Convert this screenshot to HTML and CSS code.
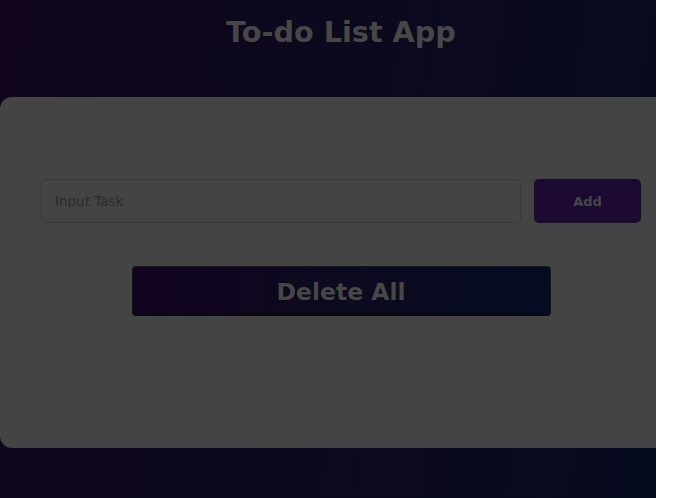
FILE: index.html
```html
<!DOCTYPE html>
<html>
<head>
<meta charset="utf-8">
<link rel="stylesheet" href="styles.css">
</head>
<body>
<div class="page">
  <div class="app">
    <h1 class="title">To-do List App</h1>
    <div class="card">
      <div class="entry">
        <input class="task-input" type="text" placeholder="Input Task">
        <button class="add-btn">Add</button>
      </div>
      <button class="delete-btn">Delete All</button>
    </div>
  </div>
</div>
</body>
</html>
```
FILE: styles.css
```css
html, body {
  margin: 0;
  padding: 0;
  background: #ffffff;
}
.page {
  width: 656px;
  height: 498px;
  overflow: hidden;
  background: linear-gradient(100deg, #10051d 0%, #0c091d 50%, #070b1e 100%);
  font-family: "DejaVu Sans", Verdana, sans-serif;
}
.app {
  width: 682px;
  display: flex;
  flex-direction: column;
}
.title {
  margin: 0;
  padding-top: 14px;
  height: 97px;
  box-sizing: border-box;
  text-align: center;
  font-size: 28.7px;
  line-height: 36px;
  font-weight: bold;
  color: #474747;
}
.card {
  height: 351px;
  box-sizing: border-box;
  background: #444444;
  border-radius: 12px;
  padding: 82px 41px 0 41px;
  display: flex;
  flex-direction: column;
  align-items: center;
}
.entry {
  width: 100%;
  display: flex;
  gap: 13px;
}
.task-input {
  flex: 1;
  height: 44px;
  box-sizing: border-box;
  margin: 0;
  background: #444444;
  border: 1px solid #393939;
  border-radius: 5px;
  padding: 0 13px;
  font-family: "DejaVu Sans", Verdana, sans-serif;
  font-size: 13.5px;
  color: #2b2b2b;
  outline: none;
}
.task-input::placeholder {
  color: #2b2b2b;
}
.add-btn {
  width: 107px;
  height: 44px;
  margin: 0;
  border: none;
  border-radius: 5px;
  background: #1c0a33;
  color: #474747;
  font-family: "DejaVu Sans", Verdana, sans-serif;
  font-weight: bold;
  font-size: 13px;
}
.delete-btn {
  margin-top: 43px;
  width: 419px;
  height: 50px;
  box-sizing: border-box;
  border: 1px solid #161616;
  border-bottom: 2px solid #0a0a0a;
  border-radius: 4px;
  background: linear-gradient(100deg, #12041f 0%, #0c0a1e 50%, #050c22 100%);
  color: #474747;
  font-family: "DejaVu Sans", Verdana, sans-serif;
  font-weight: bold;
  font-size: 23.5px;
  padding: 3px 0 0 0;
}
```
